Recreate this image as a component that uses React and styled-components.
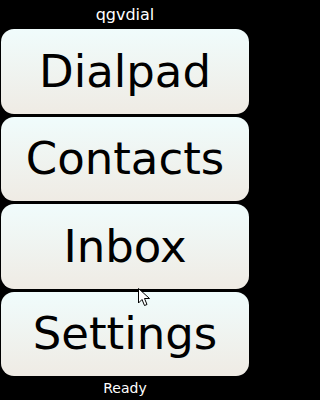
import React from 'react'
import styled, { createGlobalStyle } from 'styled-components'

const Global = createGlobalStyle`
  html, body {
    margin: 0;
    padding: 0;
    background: #000;
  }
  body {
    font-family: "DejaVu Sans", "Liberation Sans", sans-serif;
  }
`

const Screen = styled.div`
  position: relative;
  width: 250px;
  height: 400px;
  background: #000;
  display: flex;
  flex-direction: column;
  overflow: hidden;
`

const Caption = styled.div`
  height: ${p => p.$h}px;
  display: flex;
  align-items: center;
  justify-content: center;
  color: #fff;
  font-size: ${p => p.$size}px;
  line-height: 1;
`

const Menu = styled.div`
  flex: 1;
  display: flex;
  flex-direction: column;
  gap: 3px;
  padding: 0 1px;
`

const MenuButton = styled.button`
  flex: 1;
  margin: 0;
  border: none;
  border-radius: 13px;
  background: linear-gradient(#f0fcfc, #efebe4);
  color: #000;
  font-family: "DejaVu Sans", sans-serif;
  font-size: 45px;
  padding: 0;
  display: flex;
  align-items: center;
  justify-content: center;
  cursor: default;
`

const Pointer = styled.svg`
  position: absolute;
  left: 138px;
  top: 288px;
`

const items = ['Dialpad', 'Contacts', 'Inbox', 'Settings']

function App() {
  return (
    <Screen>
      <Global />
      <Caption $h={29} $size={16}>qgvdial</Caption>
      <Menu>
        {items.map(t => (
          <MenuButton key={t}>{t}</MenuButton>
        ))}
      </Menu>
      <Caption $h={24} $size={14}>Ready</Caption>
      <Pointer width="13" height="19" viewBox="0 0 13 19">
        <path d="M0.5 0.5 L0.5 15 L4 11.5 L6.5 17.5 L9 16.5 L6.5 10.5 L11.5 10.5 Z" fill="#fff" stroke="#000" strokeWidth="1" />
      </Pointer>
    </Screen>
  )
}

export default App
